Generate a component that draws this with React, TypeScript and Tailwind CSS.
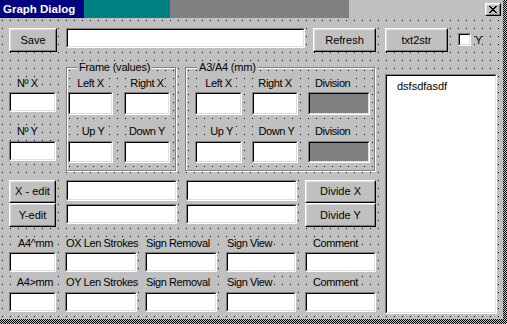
import React from "react";

const grid =
  "bg-[#c0c0c0] bg-[image:radial-gradient(circle_at_2.5px_2.5px,#000_0.75px,transparent_0.75px)] bg-[length:8px_8px]";
const hatch =
  "bg-[#c0c0c0] bg-[image:repeating-conic-gradient(#000_0_25%,#c0c0c0_0_50%)] bg-[length:2px_2px]";

function Sunken({
  className = "",
  inner = "bg-white",
  children,
}: {
  className?: string;
  inner?: string;
  children?: React.ReactNode;
}) {
  return (
    <div
      className={`box-border border border-t-[#808080] border-l-[#808080] border-b-white border-r-white ${className}`}
    >
      <div
        className={`w-full h-full box-border border border-t-black border-l-black border-b-[#dfdfdf] border-r-[#dfdfdf] ${inner}`}
      >
        {children}
      </div>
    </div>
  );
}

function Btn({ className = "", children }: { className?: string; children?: React.ReactNode }) {
  return (
    <div
      className={`box-border border border-t-white border-l-white border-b-black border-r-black bg-[#c0c0c0] ${className}`}
    >
      <div className="w-full h-full box-border border border-t-[#dfdfdf] border-l-[#dfdfdf] border-b-[#808080] border-r-[#808080] flex items-center justify-center leading-none text-black">
        {children}
      </div>
    </div>
  );
}

function Lbl({ className = "", children }: { className?: string; children?: React.ReactNode }) {
  return (
    <div className={`h-[13px] leading-[13px] whitespace-nowrap tracking-[-0.4px] ${className}`}>
      <span className="bg-[#c0c0c0] px-[1px]">{children}</span>
    </div>
  );
}

function Frame({
  caption,
  capClass,
  className = "",
  children,
}: {
  caption: string;
  capClass: string;
  className?: string;
  children?: React.ReactNode;
}) {
  return (
    <div
      className={`relative box-border border border-[#808080] shadow-[inset_1px_1px_0_#fff,1px_1px_0_#fff] ${grid} ${className}`}
    >
      <div
        className={`absolute -top-[7px] h-[13px] leading-[13px] bg-[#c0c0c0] px-[2px] whitespace-nowrap tracking-[-0.2px] ${capClass}`}
      >
        {caption}
      </div>
      {children}
    </div>
  );
}

export default function App() {
  return (
    <div className="w-[507px] h-[324px] flex flex-col bg-[#c0c0c0] overflow-hidden font-['Liberation_Sans',Arial,sans-serif] text-[11px] text-black">
      <div className="flex h-[319px]">
        <div className="w-[503px] flex flex-col">
          {/* title bar */}
          <div className="flex h-[18px] items-start bg-[#c0c0c0]">
            <div className="w-[84px] h-full bg-[#000080] text-white font-bold text-[11.5px] pl-[3px] leading-[19px] whitespace-nowrap">
              Graph Dialog
            </div>
            <div className="w-[86px] h-full bg-[#008080]" />
            <div className="w-[179px] h-full bg-[#808080]" />
            <div className="flex-1" />
            <Btn className="w-[16px] h-[13px] mt-[3px] mr-[2px]">
              <svg width="8" height="7" viewBox="0 0 8 7" shapeRendering="crispEdges">
                <path
                  d="M0 0h2v1h-2zM6 0h2v1h-2zM1 1h2v1h-2zM5 1h2v1h-2zM2 2h4v1h-4zM3 3h2v1h-2zM2 4h4v1h-4zM1 5h2v1h-2zM5 5h2v1h-2zM0 6h2v1h-2zM6 6h2v1h-2z"
                  fill="#000"
                />
              </svg>
            </Btn>
          </div>

          {/* body */}
          <div className={`flex-1 flex flex-col ${grid}`}>
            {/* row 1 */}
            <div className="flex items-start mt-[10px] pl-[9px]">
              <Btn className="w-[48px] h-[24px]">Save</Btn>
              <Sunken className="ml-[9px] w-[239px] h-[20px]" />
              <Btn className="ml-[8px] w-[63px] h-[24px]">Refresh</Btn>
              <Btn className="ml-[9px] w-[63px] h-[24px]">txt2str</Btn>
              <Sunken className="ml-[10px] mt-[5px] w-[13px] h-[13px]" />
              <div className="ml-[4px] mt-[6px] h-[13px] leading-[13px]">Y</div>
            </div>

            <div className="flex items-start">
              {/* left */}
              <div className="pl-[9px] w-[376px] flex flex-col">
                {/* section A */}
                <div className="flex items-start mt-[15px]">
                  <div className="w-[47px] flex flex-col">
                    <Lbl className="mt-[10px] pl-[7px]">Nº X</Lbl>
                    <Sunken className="mt-[2px] w-[47px] h-[20px]" />
                    <Lbl className="mt-[13px] pl-[7px]">Nº Y</Lbl>
                    <Sunken className="mt-[3px] w-[47px] h-[20px]" />
                  </div>

                  <Frame caption="Frame (values)" capClass="left-[10px]" className="ml-[10px] w-[110px] h-[104px]">
                    <div className="flex pl-[1px]">
                      <div className="w-[45px] flex flex-col">
                        <Lbl className="mt-[9px] text-center">Left X</Lbl>
                        <Sunken className="mt-[2px] w-[45px] h-[23px]" />
                        <Lbl className="mt-[10px] text-center pl-[5px]">Up Y</Lbl>
                        <Sunken className="mt-[3px] w-[45px] h-[22px]" />
                      </div>
                      <div className="ml-[11px] w-[46px] flex flex-col">
                        <Lbl className="mt-[9px] text-center">Right X</Lbl>
                        <Sunken className="mt-[2px] w-[46px] h-[23px]" />
                        <Lbl className="mt-[10px] text-center">Down Y</Lbl>
                        <Sunken className="mt-[3px] w-[46px] h-[22px]" />
                      </div>
                    </div>
                  </Frame>

                  <Frame caption="A3/A4 (mm)" capClass="left-[11px]" className="ml-[9px] w-[190px] h-[104px]">
                    <div className="flex pl-[9px]">
                      <div className="w-[47px] flex flex-col">
                        <Lbl className="mt-[9px] text-center">Left X</Lbl>
                        <Sunken className="mt-[2px] w-[47px] h-[23px]" />
                        <Lbl className="mt-[10px] text-center pl-[6px]">Up Y</Lbl>
                        <Sunken className="mt-[3px] w-[47px] h-[22px]" />
                      </div>
                      <div className="ml-[10px] w-[46px] flex flex-col">
                        <Lbl className="mt-[9px] text-center">Right X</Lbl>
                        <Sunken className="mt-[2px] w-[46px] h-[23px]" />
                        <Lbl className="mt-[10px] text-center pl-[3px]">Down Y</Lbl>
                        <Sunken className="mt-[3px] w-[46px] h-[22px]" />
                      </div>
                      <div className="ml-[10px] w-[62px] flex flex-col">
                        <Lbl className="mt-[9px] pl-[6px]">Division</Lbl>
                        <Sunken className="mt-[2px] w-[62px] h-[23px]" inner="bg-[#808080]" />
                        <Lbl className="mt-[10px] pl-[6px]">Division</Lbl>
                        <Sunken className="mt-[3px] w-[62px] h-[22px]" inner="bg-[#808080]" />
                      </div>
                    </div>
                  </Frame>
                </div>

                {/* section B */}
                <div className="flex items-start mt-[9px]">
                  <div className="w-[47px] flex flex-col">
                    <Btn className="w-[47px] h-[23px]">X - edit</Btn>
                    <Btn className="w-[47px] h-[24px]">Y-edit</Btn>
                  </div>
                  <div className="ml-[10px] w-[111px] flex flex-col">
                    <Sunken className="w-[111px] h-[21px]" />
                    <Sunken className="mt-[3px] w-[111px] h-[20px]" />
                  </div>
                  <div className="ml-[9px] w-[111px] flex flex-col">
                    <Sunken className="w-[111px] h-[21px]" />
                    <Sunken className="mt-[3px] w-[111px] h-[20px]" />
                  </div>
                  <div className="ml-[8px] w-[71px] flex flex-col">
                    <Btn className="w-[71px] h-[23px]">Divide X</Btn>
                    <Btn className="w-[71px] h-[24px]">Divide Y</Btn>
                  </div>
                </div>

                {/* section C */}
                <div className="flex items-start">
                  <div className="w-[47px] flex flex-col">
                    <Lbl className="mt-[10px] text-right pr-[2px]">A4^mm</Lbl>
                    <Sunken className="mt-[2px] w-[47px] h-[20px]" />
                    <Lbl className="mt-[4px] text-right pr-[2px]">A4&gt;mm</Lbl>
                    <Sunken className="mt-[3px] w-[47px] h-[20px]" />
                  </div>
                  <div className="ml-[9px] w-[72px] flex flex-col">
                    <Lbl className="mt-[10px]">OX Len Strokes</Lbl>
                    <Sunken className="mt-[2px] w-[72px] h-[20px]" />
                    <Lbl className="mt-[4px]">OY Len Strokes</Lbl>
                    <Sunken className="mt-[3px] w-[72px] h-[20px]" />
                  </div>
                  <div className="ml-[8px] w-[72px] flex flex-col">
                    <Lbl className="mt-[10px]">Sign Removal</Lbl>
                    <Sunken className="mt-[2px] w-[72px] h-[20px]" />
                    <Lbl className="mt-[4px]">Sign Removal</Lbl>
                    <Sunken className="mt-[3px] w-[72px] h-[20px]" />
                  </div>
                  <div className="ml-[9px] w-[70px] flex flex-col">
                    <Lbl className="mt-[10px]">Sign View</Lbl>
                    <Sunken className="mt-[2px] w-[70px] h-[20px]" />
                    <Lbl className="mt-[4px]">Sign View</Lbl>
                    <Sunken className="mt-[3px] w-[70px] h-[20px]" />
                  </div>
                  <div className="ml-[9px] w-[71px] flex flex-col">
                    <Lbl className="mt-[10px] pl-[7px]">Comment</Lbl>
                    <Sunken className="mt-[2px] w-[71px] h-[20px]" />
                    <Lbl className="mt-[4px] pl-[7px]">Comment</Lbl>
                    <Sunken className="mt-[3px] w-[71px] h-[20px]" />
                  </div>
                </div>
              </div>

              {/* list box */}
              <Sunken className="ml-[9px] mt-[22px] w-[112px] h-[240px]">
                <div className="pl-[10px] pt-[4px] leading-[13px]">dsfsdfasdf</div>
              </Sunken>
            </div>
          </div>
        </div>
        <div className={`w-[4px] ${hatch}`} />
      </div>
      <div className={`h-[5px] ${hatch}`} />
    </div>
  );
}
